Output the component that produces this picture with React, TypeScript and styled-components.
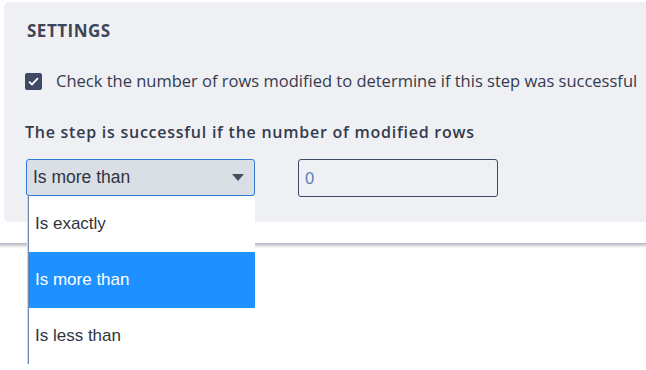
import React from "react";
import styled, { createGlobalStyle } from "styled-components";

const GlobalStyle = createGlobalStyle`
  html, body {
    margin: 0;
    padding: 0;
    background: #ffffff;
    overflow: hidden;
  }
`;

const Page = styled.div`
  width: 646px;
  height: 370px;
  overflow: hidden;
  padding-top: 2px;
  box-sizing: border-box;
`;

const Panel = styled.section`
  margin-left: 4px;
  height: 220px;
  box-sizing: border-box;
  background: #eff0f4;
  border-radius: 5px 0 0 5px;
  padding: 17px 0 0 21px;
  font-family: "Open Sans", "Segoe UI", sans-serif;
  color: #343b4d;
`;

const Title = styled.h3`
  margin: 0 0 0 2px;
  font-size: 17px;
  font-weight: 700;
  line-height: 23px;
  color: #3e4559;
  letter-spacing: 0.5px;
`;

const CheckRow = styled.label`
  display: flex;
  align-items: center;
  gap: 14px;
  margin-top: 29px;
  font-size: 16.5px;
  line-height: 20px;
  white-space: nowrap;
`;

const CheckBox = styled.span`
  width: 17px;
  height: 17px;
  flex: none;
  background: #3e4a66;
  border-radius: 2px;
  display: flex;
  align-items: center;
  justify-content: center;
`;

const FieldLabel = styled.div`
  margin-top: 31px;
  font-size: 16px;
  font-weight: 600;
  line-height: 20px;
  letter-spacing: 0.75px;
  white-space: nowrap;
`;

const Controls = styled.div`
  display: flex;
  align-items: flex-start;
  gap: 43px;
  margin-top: 17px;
  margin-left: 1px;
`;

const SelectWrap = styled.div`
  position: relative;
  width: 229px;
`;

const SelectBox = styled.div`
  height: 37px;
  box-sizing: border-box;
  background: #dadfe6;
  border: 1px solid #2f7ad6;
  border-radius: 3px;
  display: flex;
  align-items: center;
  justify-content: space-between;
  padding: 0 10px 0 6px;
  font-family: "Liberation Sans", Arial, sans-serif;
  font-size: 17.5px;
  color: #2f3440;
`;

const Caret = styled.span`
  width: 0;
  height: 0;
  border-left: 6px solid transparent;
  border-right: 6px solid transparent;
  border-top: 7px solid #474f62;
`;

const NumberInput = styled.div`
  width: 200px;
  height: 38px;
  box-sizing: border-box;
  border: 1px solid #3e4a66;
  border-radius: 3px;
  display: flex;
  align-items: center;
  padding-left: 6px;
  font-family: "Liberation Sans", Arial, sans-serif;
  font-size: 16.5px;
  color: #5a80b8;
`;

const ListBox = styled.ul`
  position: absolute;
  top: 37px;
  left: 2px;
  width: 226px;
  margin: 0;
  padding: 0;
  list-style: none;
  background: #ffffff;
  border-left: 1px solid #6d87b3;
  box-shadow: -1px 0 0 #d4d6dc;
  z-index: 2;
  font-family: "Liberation Sans", Arial, sans-serif;
  font-size: 17px;
`;

const Option = styled.li<{ $active?: boolean }>`
  height: 56px;
  display: flex;
  align-items: center;
  padding-left: 6px;
  background: ${(p) => (p.$active ? "#1e90ff" : "#ffffff")};
  color: ${(p) => (p.$active ? "#ffffff" : "#2f3440")};
`;

const Divider = styled.div`
  margin-top: 21px;
  height: 5px;
  background: linear-gradient(#b1b4bf, rgba(255, 255, 255, 0));
`;

const options = ["Is exactly", "Is more than", "Is less than"];

const App: React.FC = () => {
  return (
    <Page>
      <GlobalStyle />
      <Panel>
        <Title>SETTINGS</Title>
        <CheckRow>
          <CheckBox>
            <svg width="11" height="9" viewBox="0 0 11 9">
              <path
                d="M1 4.6 L4 7.4 L10 1.2"
                fill="none"
                stroke="#ffffff"
                strokeWidth="1.8"
              />
            </svg>
          </CheckBox>
          Check the number of rows modified to determine if this step was
          successful
        </CheckRow>
        <FieldLabel>The step is successful if the number of modified rows</FieldLabel>
        <Controls>
          <SelectWrap>
            <SelectBox>
              Is more than
              <Caret />
            </SelectBox>
            <ListBox>
              {options.map((o) => (
                <Option key={o} $active={o === "Is more than"}>
                  {o}
                </Option>
              ))}
            </ListBox>
          </SelectWrap>
          <NumberInput>0</NumberInput>
        </Controls>
      </Panel>
      <Divider />
    </Page>
  );
};

export default App;
